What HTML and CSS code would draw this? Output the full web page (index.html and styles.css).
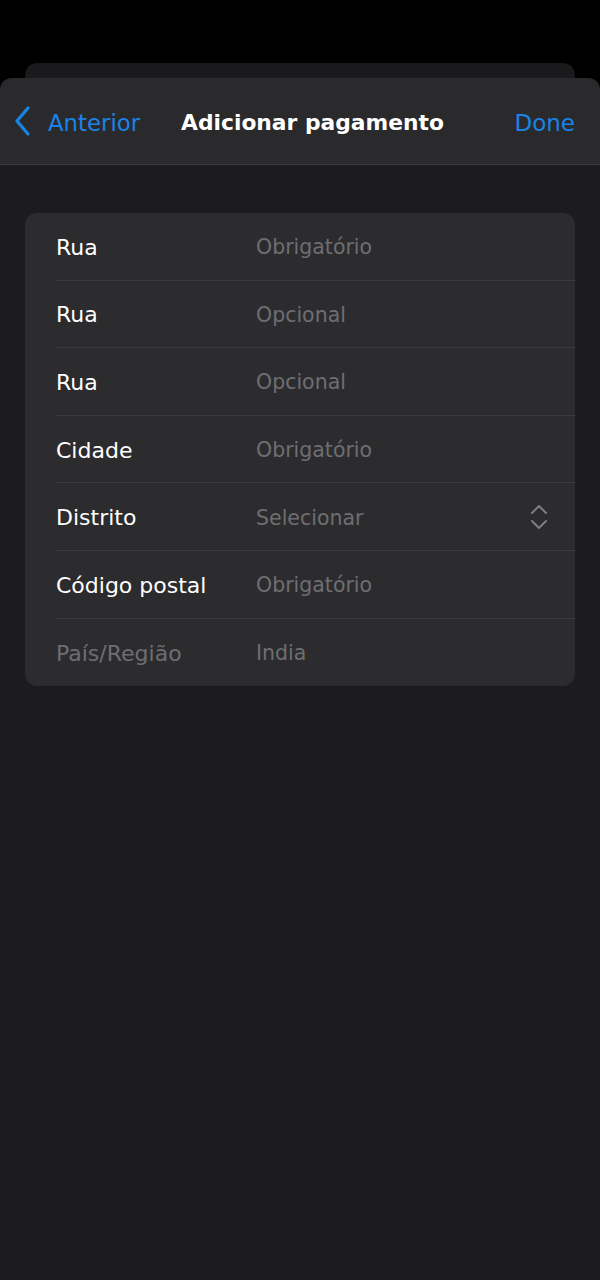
FILE: index.html
```html
<!DOCTYPE html>
<html lang="pt">
<head>
<meta charset="utf-8">
<link rel="stylesheet" href="styles.css">
</head>
<body>
<div class="screen">
  <div class="back-card"></div>
  <div class="sheet">
    <header class="nav">
      <a class="nav-back">
        <svg class="chev" width="20" height="30" viewBox="0 0 20 30"><path d="M15 2 L4 15 L15 28" fill="none" stroke="#1a84e6" stroke-width="3.2" stroke-linecap="round" stroke-linejoin="round"/></svg>
        <span>Anterior</span>
      </a>
      <div class="nav-title">Adicionar pagamento</div>
      <a class="nav-done">Done</a>
    </header>
    <main class="content">
      <section class="card">
        <div class="row"><span class="label">Rua</span><span class="value">Obrigatório</span></div>
        <div class="row"><span class="label">Rua</span><span class="value">Opcional</span></div>
        <div class="row"><span class="label">Rua</span><span class="value">Opcional</span></div>
        <div class="row"><span class="label">Cidade</span><span class="value">Obrigatório</span></div>
        <div class="row"><span class="label">Distrito</span><span class="value">Selecionar</span>
          <svg class="updown" width="18" height="26" viewBox="0 0 18 26"><path d="M2 9 L9 2 L16 9 M2 17 L9 24 L16 17" fill="none" stroke="#7d7d82" stroke-width="2" stroke-linecap="round" stroke-linejoin="round"/></svg>
        </div>
        <div class="row"><span class="label">Código postal</span><span class="value">Obrigatório</span></div>
        <div class="row"><span class="label dim">País/Região</span><span class="value">India</span></div>
      </section>
    </main>
  </div>
</div>
</body>
</html>
```

FILE: styles.css
```css
html, body {
  margin: 0;
  padding: 0;
  background: #000;
}
body {
  font-family: "DejaVu Sans", Verdana, sans-serif;
  color: #fff;
}
.screen {
  width: 600px;
  height: 1280px;
  display: flex;
  flex-direction: column;
  padding-top: 63px;
  box-sizing: border-box;
  overflow: hidden;
}
.back-card {
  height: 15px;
  margin: 0 25px;
  background: #1a1a1c;
  border-radius: 12px 12px 0 0;
  flex: none;
}
.sheet {
  flex: 1;
  background: #1c1c1e;
  border-radius: 12px 12px 0 0;
  overflow: hidden;
  display: flex;
  flex-direction: column;
}
.nav {
  height: 87px;
  flex: none;
  background: #2a2a2c;
  border-bottom: 1px solid #3a3a3c;
  display: flex;
  align-items: center;
  padding: 3px 25px 0 13px;
  box-sizing: border-box;
  white-space: nowrap;
}
.nav-back {
  display: flex;
  align-items: center;
  gap: 15px;
  color: #1a84e6;
  font-size: 22.8px;
  flex: none;
}
.chev { flex: none; margin-top: -3px; }
.nav-title {
  font-weight: 700;
  font-size: 21.8px;
  color: #fff;
  margin-left: 41px;
  flex: none;
}
.nav-done {
  color: #1a84e6;
  font-size: 23px;
  margin-left: auto;
  flex: none;
}
.content {
  padding: 48px 25px 0;
}
.card {
  background: #2c2c2e;
  border-radius: 12px;
  padding-left: 31px;
  overflow: hidden;
}
.row {
  height: 67.6px;
  display: flex;
  align-items: center;
  box-sizing: border-box;
  border-bottom: 1px solid #3c3c3e;
  padding: 2px 27px 0 0;
  white-space: nowrap;
}
.row:last-child { border-bottom: none; }
.label {
  width: 200px;
  flex: none;
  color: #fff;
  font-size: 22px;
}
.label.dim { color: #6e6e72; }
.value {
  flex: 1;
  color: #6e6e72;
  font-size: 20.5px;
}
.updown { flex: none; margin-top: -2px; }
```
